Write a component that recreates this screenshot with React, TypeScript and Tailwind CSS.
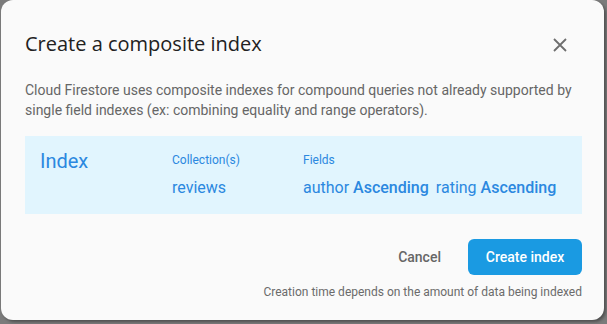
export default function App() {
  return (
    <main className="w-[607px] h-[324px] bg-[#7b7b7b] overflow-hidden" style={{ fontFamily: 'Roboto, "Noto Sans", sans-serif' }}>
      <div className="ml-px w-[603px] h-[320px] bg-[#fafafa] rounded-[12px] shadow-[2px_2px_3px_rgba(0,0,0,0.35)] px-6 pt-[30px]">
        <div className="flex items-center justify-between">
          <h1 className="text-[20px] leading-[28px] text-[#212121]" style={{ fontFamily: '"Open Sans", Roboto, sans-serif' }}>
            Create a composite index
          </h1>
          <button className="w-6 h-6 flex items-center justify-center mr-[8px] mt-[2px]">
            <svg width="14" height="14" viewBox="0 0 14 14">
              <path d="M1 1L13 13M13 1L1 13" stroke="#6e6e6e" strokeWidth="1.8" />
            </svg>
          </button>
        </div>

        <p className="mt-[22px] text-[14px] leading-[20px] text-[#666]">
          Cloud Firestore uses composite indexes for compound queries not already supported by single field indexes (ex: combining equality and range operators).
        </p>

        <div className="mt-[16px] mr-[-2px] h-[78px] bg-[#e1f5fe] flex pl-[15px] pt-[13px] text-[#2b88e0]">
          <div className="w-[132px] text-[20px] leading-[24px]">Index</div>
          <div className="w-[131px]">
            <div className="text-[12px] leading-[16px] mt-[3px]">Collection(s)</div>
            <div className="text-[16px] leading-[20px] mt-[10px]">reviews</div>
          </div>
          <div>
            <div className="text-[12px] leading-[16px] mt-[3px]">Fields</div>
            <div className="text-[16px] leading-[20px] mt-[10px] whitespace-nowrap">
              author <span className="font-medium">Ascending</span>
              <span className="ml-[7px]">rating</span> <span className="font-medium">Ascending</span>
            </div>
          </div>
        </div>

        <div className="mt-[25px] mr-[-2px] flex justify-end items-center gap-[24px]">
          <button className="text-[14px] font-medium text-[#666] mr-[3px]">Cancel</button>
          <button className="w-[114px] h-[36px] rounded-[6px] bg-[#1a9ae2] text-white text-[14px] font-medium">
            Create index
          </button>
        </div>

        <p className="mt-[9px] mr-[-2px] text-right text-[12px] leading-[16px] text-[#6b6b6b]">
          Creation time depends on the amount of data being indexed
        </p>
      </div>
    </main>
  );
}
